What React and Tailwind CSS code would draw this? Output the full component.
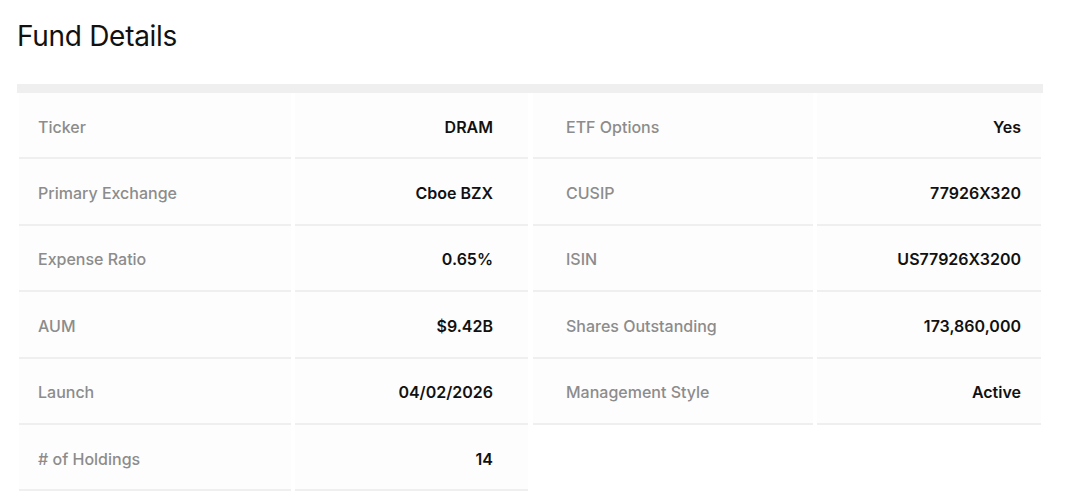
export default function App() {
  const left = [
    ["Ticker", "DRAM"],
    ["Primary Exchange", "Cboe BZX"],
    ["Expense Ratio", "0.65%"],
    ["AUM", "$9.42B"],
    ["Launch", "04/02/2026"],
    ["# of Holdings", "14"],
  ];
  const right = [
    ["ETF Options", "Yes"],
    ["CUSIP", "77926X320"],
    ["ISIN", "US77926X3200"],
    ["Shares Outstanding", "173,860,000"],
    ["Management Style", "Active"],
  ];
  return (
    <div className="w-[1080px] h-[494px] overflow-hidden bg-white font-['Inter',sans-serif]">
      <h2 className="pl-[17px] pt-[18px] text-[28px] leading-[36px] font-normal text-[#111] tracking-[-0.3px]">
        Fund Details
      </h2>
      <div className="ml-[17px] mt-[30px] w-[1026px]">
        <div className="h-[9px] bg-[#efefef]" />
        <div className="flex gap-[5px] px-[2px]">
          <div className="flex flex-col w-[509px]">
            {left.map(([k, v]) => (
              <div key={k} className="flex gap-[4px]">
                <div className="w-[272px] h-[66.4px] flex items-center pt-[3px] pl-[19px] bg-[#fdfdfd] border-b-2 border-[#efefef] text-[16px] font-medium text-[#8c8c8c]">
                  {k}
                </div>
                <div className="flex-1 h-[66.4px] flex items-center justify-end pt-[3px] pr-[35px] bg-[#fdfdfd] border-b-2 border-[#efefef] text-[16px] font-semibold text-[#111]">
                  {v}
                </div>
              </div>
            ))}
          </div>
          <div className="flex flex-col w-[508px]">
            {right.map(([k, v]) => (
              <div key={k} className="flex gap-[4px]">
                <div className="w-[280px] h-[66.4px] flex items-center pt-[3px] pl-[33px] bg-[#fdfdfd] border-b-2 border-[#efefef] text-[16px] font-medium text-[#8c8c8c]">
                  {k}
                </div>
                <div className="flex-1 h-[66.4px] flex items-center justify-end pt-[3px] pr-[20px] bg-[#fdfdfd] border-b-2 border-[#efefef] text-[16px] font-semibold text-[#111]">
                  {v}
                </div>
              </div>
            ))}
          </div>
        </div>
      </div>
    </div>
  );
}
